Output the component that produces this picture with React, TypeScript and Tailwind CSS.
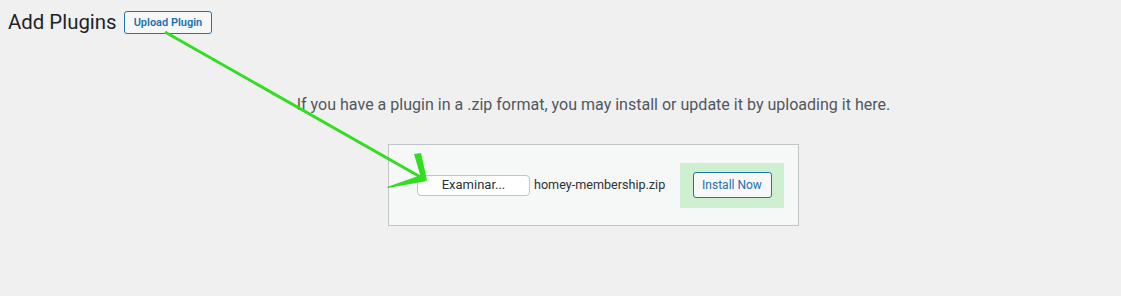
import React from "react";

export default function App() {
  return (
    <div
      className="relative w-[1121px] h-[296px] bg-[#f0f0f1] overflow-hidden"
      style={{ fontFamily: "Roboto, 'Liberation Sans', sans-serif" }}
    >
      <div className="flex items-center gap-[7px] pl-[8px] pt-[10px]">
        <h1 className="text-[20.4px] leading-[24px] font-normal text-[#1d2327]">Add Plugins</h1>
        <button className="h-[23px] px-[9px] border border-[#2271b1] rounded-[3px] bg-[#f6f7f7] text-[#2271b1] text-[11px] font-semibold leading-none">
          Upload Plugin
        </button>
      </div>

      <div className="flex flex-col items-center pl-[66px] pt-[60px]">
        <p className="text-[16.05px] leading-[22px] text-[#50575e]">
          If you have a plugin in a .zip format, you may install or update it by uploading it here.
        </p>
        <div className="mt-[28px] w-[411px] h-[82px] border border-[#c3c4c7] bg-[#f6f7f7] flex items-center pl-[28px] pr-[14px]">
          <div className="w-[113px] h-[21px] border border-[#c3c4c7] rounded-[4px] bg-white flex items-center justify-center text-[13px] text-[#2c3338]">
            Examinar...
          </div>
          <span className="ml-[4px] text-[12.6px] text-[#2c3338]">homey-membership.zip</span>
          <div className="ml-auto w-[104px] h-[45px] bg-[#cff0d0] flex items-center justify-center">
            <button className="w-[79px] h-[26px] border border-[#2271b1] rounded-[3px] bg-[#f6f7f7] text-[#2271b1] text-[12px] leading-none">
              Install Now
            </button>
          </div>
        </div>
      </div>

      <svg
        className="absolute left-0 top-0 pointer-events-none"
        width="1121"
        height="296"
        viewBox="0 0 1121 296"
      >
        <line x1="165" y1="32" x2="424" y2="179" stroke="#33dd22" strokeWidth="3" />
        <polygon points="414,154 421,153 427,180 421,178" fill="#33dd22" />
        <polygon points="387,187 421,175 427,181 388,188" fill="#33dd22" />
      </svg>
    </div>
  );
}
